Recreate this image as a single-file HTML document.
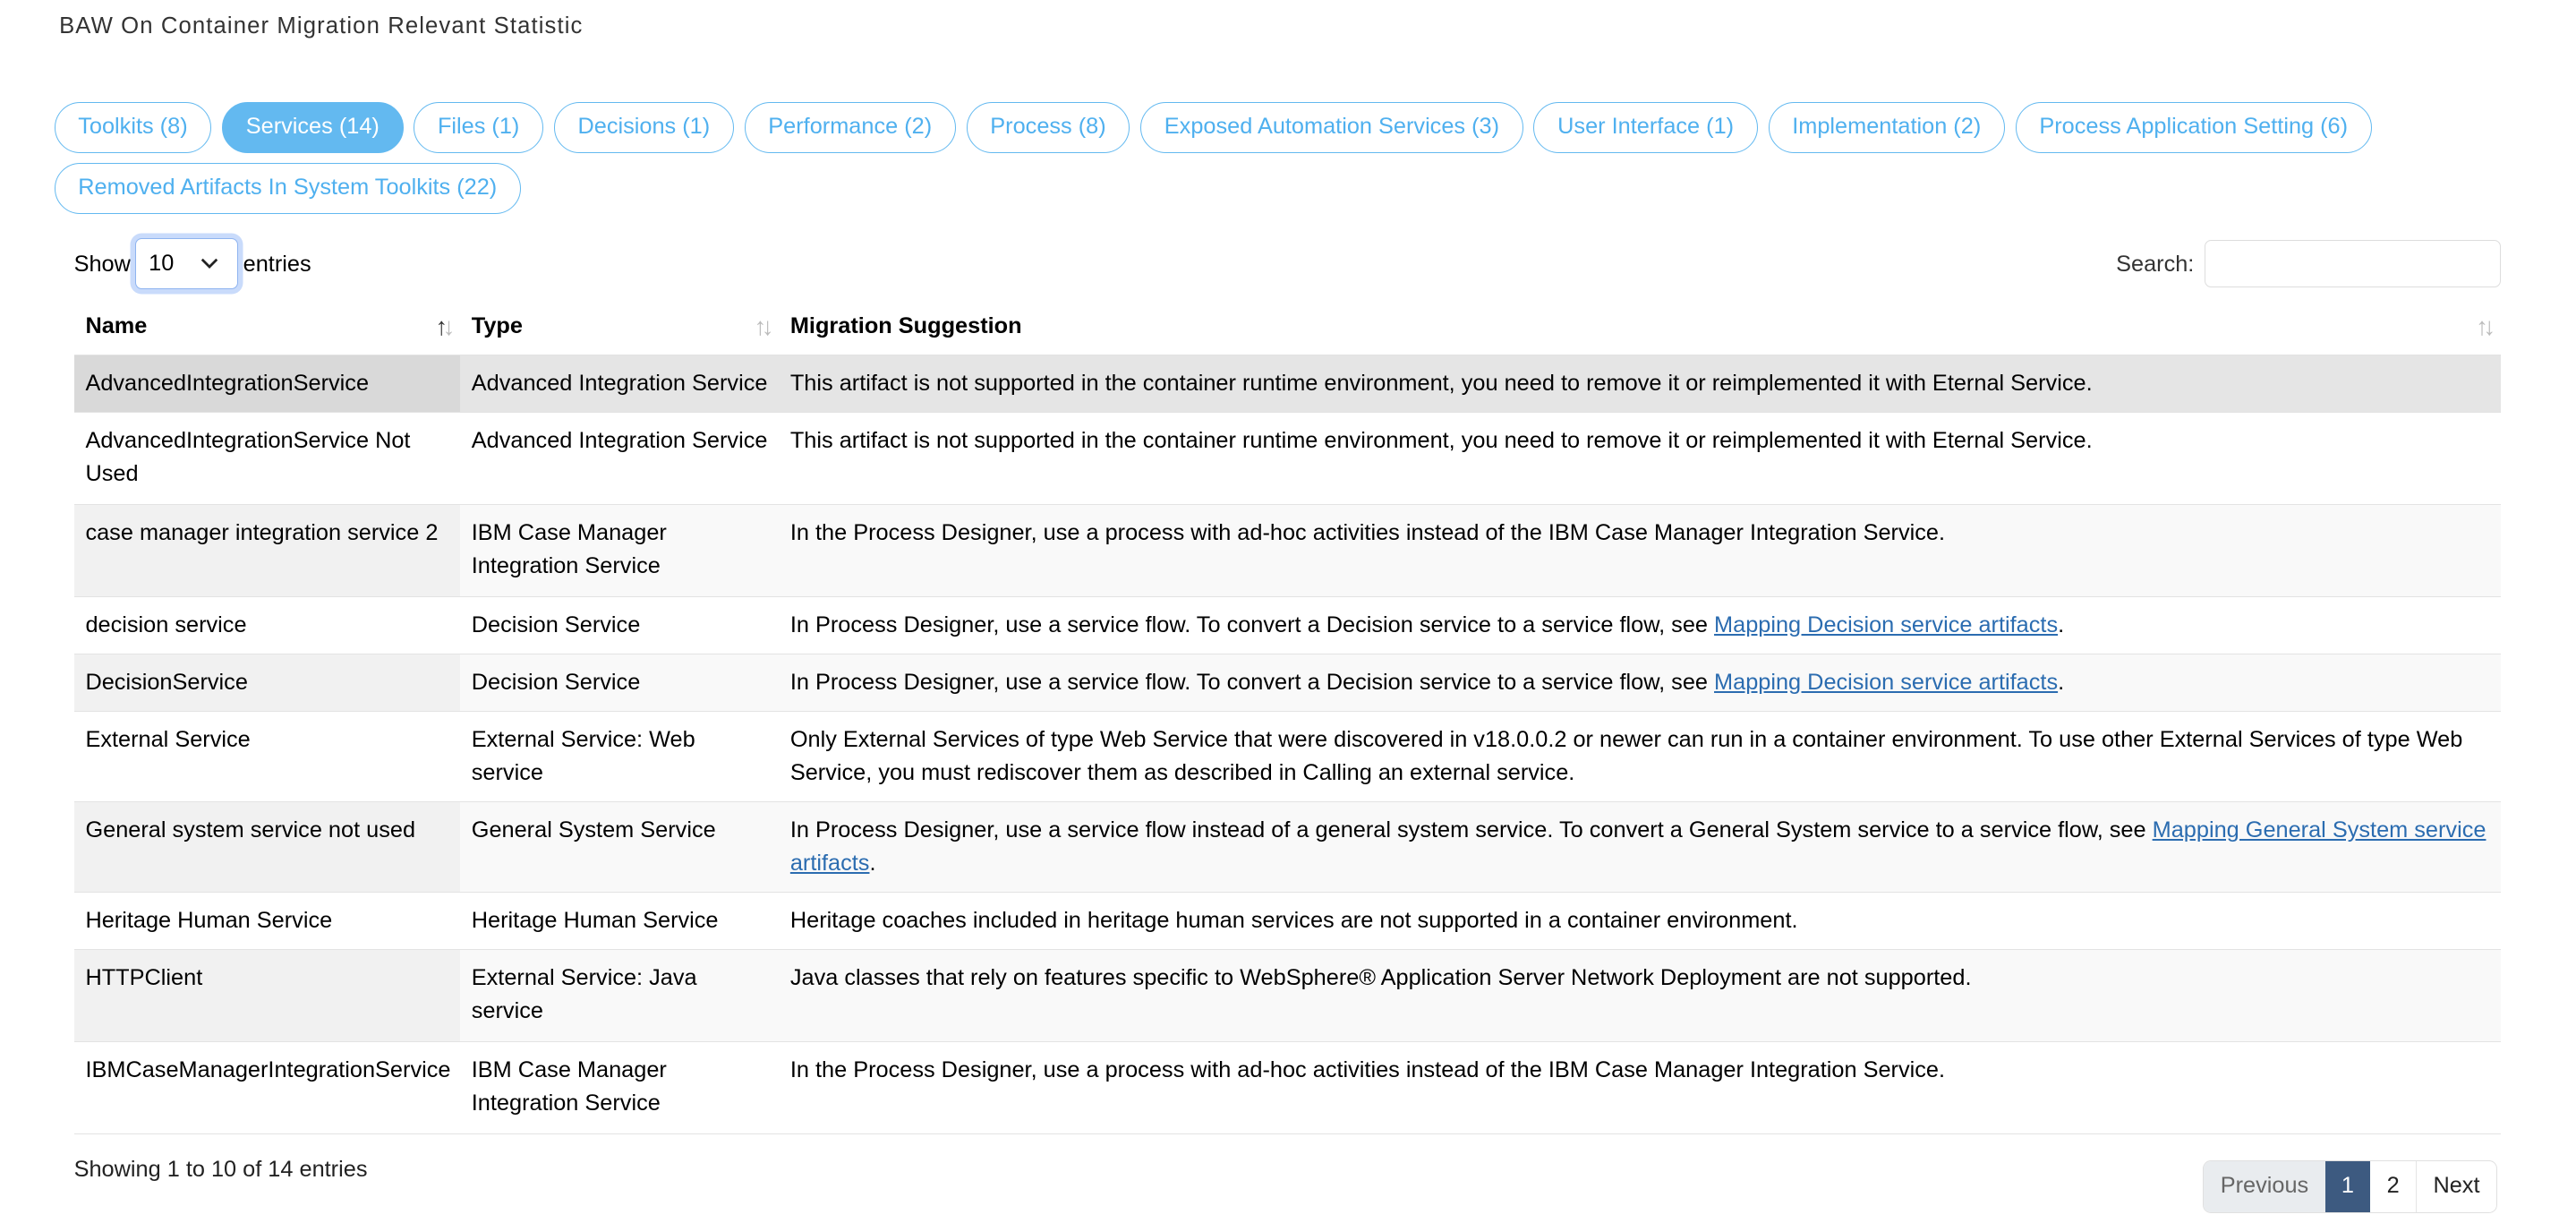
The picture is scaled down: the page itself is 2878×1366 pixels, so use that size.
<!DOCTYPE html>
<html><head><meta charset="utf-8"><style>
html,body{margin:0;padding:0;background:#fff;}
body{width:2878px;height:1366px;overflow:hidden;}
#w{zoom:1.8355;width:1568px;height:744px;position:relative;font-family:"Liberation Sans",Arial,sans-serif;font-size:13.8px;color:#000;}
.title{position:absolute;left:36px;top:8px;font-size:14px;letter-spacing:0.6px;color:#333;}
.tabs{position:absolute;left:33px;top:62px;width:1460px;}
.tab{display:inline-block;box-sizing:border-box;height:31px;line-height:29px;padding:0 14px;border:1px solid #63b9f0;border-radius:16px;color:#4fb0ef;margin:0 6.4px 6px 0;font-size:13.8px;}
.tab.on{background:#63b9f0;color:#fff;}
.show{position:absolute;left:45px;top:153px;}
.sel{position:absolute;left:82px;top:145px;width:63px;height:31px;box-sizing:border-box;border:1px solid #8fb4f0;border-radius:4px;box-shadow:0 0 0 3px #c9dbfb;background:#fff;}
.sel span{position:absolute;left:8px;top:7px;}
.sel svg{position:absolute;left:39px;top:11px;}
.ent{position:absolute;left:148px;top:153px;}
.slab{position:absolute;left:1288px;top:153px;color:#333;}
.sin{position:absolute;left:1342px;top:146px;width:180px;height:29px;box-sizing:border-box;border:1px solid #ddd;border-radius:4px;}
table{position:absolute;left:45px;top:181px;width:1477px;border-collapse:collapse;table-layout:fixed;}
th{height:35px;text-align:left;font-weight:bold;padding:0 7px;position:relative;box-sizing:border-box;vertical-align:middle;}
th .ar{position:absolute;right:6px;top:9px;color:#bbb;font-weight:normal;font-size:15px;letter-spacing:-3px;}
td{padding:7px 5px 7px 7px;line-height:20px;vertical-align:top;border-top:1px solid #e3e3e3;box-sizing:border-box;}
td.n{white-space:nowrap;overflow:hidden;}
tr.o td{background:#f9f9f9;}
tr.o td.s{background:#f1f1f1;}
tr.h td{background:#e5e5e5;}
tr.h td.s{background:#d9d9d9;}
tr:last-child td{border-bottom:1px solid #e3e3e3;}
a{color:#2b6cb0;text-decoration:underline;}
.info{position:absolute;left:45px;top:704px;color:#222;}
.pg{position:absolute;left:1341px;top:706px;height:32px;display:flex;border:1px solid #e0e0e0;border-radius:5px;overflow:hidden;box-sizing:border-box;}
.pg div{line-height:30px;padding:0 10px;border-left:1px solid #e5e5e5;color:#222;}
.pg .p{background:#e9ecef;color:#666;border:0;}
.pg .c{background:#3d5a80;color:#fff;border:0;padding:0 10px;}
</style></head><body><div id="w">
<div class="title">BAW On Container Migration Relevant Statistic</div>
<div class="tabs">
<span class="tab">Toolkits (8)</span><span class="tab on">Services (14)</span><span class="tab">Files (1)</span><span class="tab">Decisions (1)</span><span class="tab">Performance (2)</span><span class="tab">Process (8)</span><span class="tab">Exposed Automation Services (3)</span><span class="tab">User Interface (1)</span><span class="tab">Implementation (2)</span><span class="tab">Process Application Setting (6)</span><br><span class="tab">Removed Artifacts In System Toolkits (22)</span>
</div>
<div class="show">Show</div>
<div class="sel"><span>10</span><svg width="12" height="8" viewBox="0 0 12 8"><path d="M1.5 1.5L6 6L10.5 1.5" fill="none" stroke="#222" stroke-width="1.5"/></svg></div>
<div class="ent">entries</div>
<div class="slab">Search:</div>
<div class="sin"></div>
<table>
<colgroup><col style="width:235px"><col style="width:194px"><col></colgroup>
<tr><th>Name<span class="ar"><span style="color:#333">↑</span>↓</span></th><th>Type<span class="ar">↑↓</span></th><th>Migration Suggestion<span class="ar">↑↓</span></th></tr>
<tr class="h" style="height:35px"><td class="s">AdvancedIntegrationService</td><td class="n">Advanced Integration Service</td><td>This artifact is not supported in the container runtime environment, you need to remove it or reimplemented it with Eternal Service.</td></tr>
<tr style="height:56px"><td>AdvancedIntegrationService Not Used</td><td class="n">Advanced Integration Service</td><td>This artifact is not supported in the container runtime environment, you need to remove it or reimplemented it with Eternal Service.</td></tr>
<tr class="o" style="height:56px"><td class="s">case manager integration service 2</td><td>IBM Case Manager Integration Service</td><td>In the Process Designer, use a process with ad-hoc activities instead of the IBM Case Manager Integration Service.</td></tr>
<tr style="height:35px"><td>decision service</td><td>Decision Service</td><td>In Process Designer, use a service flow. To convert a Decision service to a service flow, see <a>Mapping Decision service artifacts</a>.</td></tr>
<tr class="o" style="height:35px"><td class="s">DecisionService</td><td>Decision Service</td><td>In Process Designer, use a service flow. To convert a Decision service to a service flow, see <a>Mapping Decision service artifacts</a>.</td></tr>
<tr style="height:55px"><td>External Service</td><td>External Service: Web service</td><td>Only External Services of type Web Service that were discovered in v18.0.0.2 or newer can run in a container environment. To use other External Services of type Web Service, you must rediscover them as described in Calling an external service.</td></tr>
<tr class="o" style="height:55px"><td class="s">General system service not used</td><td>General System Service</td><td>In Process Designer, use a service flow instead of a general system service. To convert a General System service to a service flow, see <a>Mapping General System service artifacts</a>.</td></tr>
<tr style="height:35px"><td>Heritage Human Service</td><td>Heritage Human Service</td><td>Heritage coaches included in heritage human services are not supported in a container environment.</td></tr>
<tr class="o" style="height:56px"><td class="s">HTTPClient</td><td>External Service: Java service</td><td>Java classes that rely on features specific to WebSphere® Application Server Network Deployment are not supported.</td></tr>
<tr style="height:56px"><td class="n">IBMCaseManagerIntegrationService</td><td>IBM Case Manager Integration Service</td><td>In the Process Designer, use a process with ad-hoc activities instead of the IBM Case Manager Integration Service.</td></tr>
</table>
<div class="info">Showing 1 to 10 of 14 entries</div>
<div class="pg"><div class="p">Previous</div><div class="c">1</div><div style="border:0">2</div><div>Next</div></div>
</div></body></html>
